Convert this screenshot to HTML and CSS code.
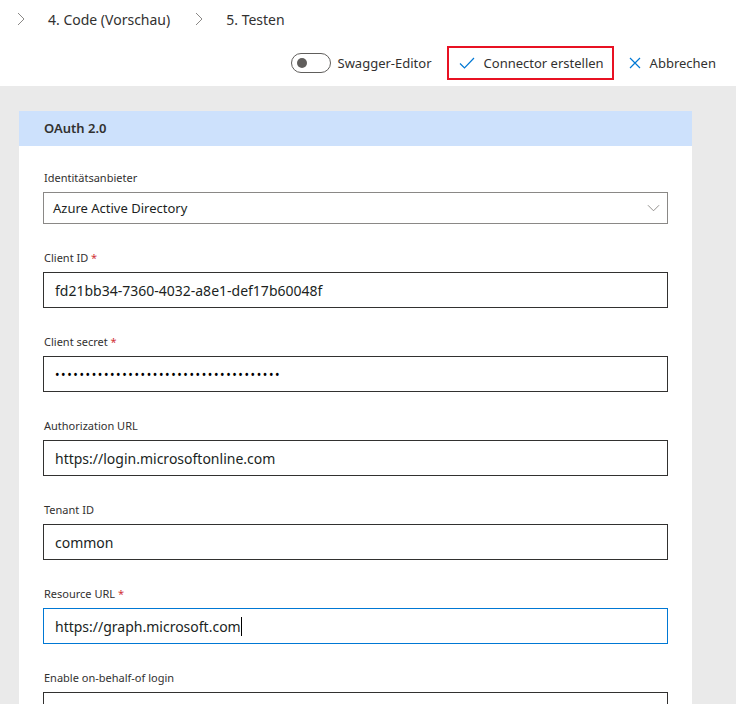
FILE: index.html
```html
<!DOCTYPE html>
<html lang="de">
<head>
  <meta charset="UTF-8">
  <meta name="viewport" content="width=device-width, initial-scale=1.0">
  <title>Benutzerdefinierter Connector</title>
  <link rel="stylesheet" href="styles.css">
</head>
<body>
  <header class="topbar">
    <nav class="steps">
      <svg class="chev" viewBox="0 0 8 14" width="8" height="14"><path d="M1 1l6 6-6 6" /></svg>
      <span class="step">4. Code (Vorschau)</span>
      <svg class="chev" viewBox="0 0 8 14" width="8" height="14"><path d="M1 1l6 6-6 6" /></svg>
      <span class="step">5. Testen</span>
    </nav>

    <div class="toolbar">
      <label class="toggle">
        <span class="switch"><span class="knob"></span></span>
        Swagger-Editor
      </label>
      <button class="cmd cmd-create">
        <svg viewBox="0 0 16 12" width="16" height="12"><path d="M1 6.5l4.5 4.5L15 1" /></svg>
        Connector erstellen
      </button>
      <button class="cmd">
        <svg viewBox="0 0 12 12" width="12" height="12"><path d="M1 1l10 10M11 1L1 11" /></svg>
        Abbrechen
      </button>
    </div>
  </header>

  <main class="content">
    <section class="card">
      <div class="card-head">OAuth 2.0</div>
      <div class="card-body">
        <div class="field">
          <div class="label">Identitätsanbieter</div>
          <div class="box box-select">
            Azure Active Directory
            <svg class="caret-down" viewBox="0 0 14 8" width="13" height="8"><path d="M1 1l6 6 6-6" /></svg>
          </div>
        </div>

        <div class="field">
          <div class="label">Client ID <span class="req">*</span></div>
          <div class="box">fd21bb34-7360-4032-a8e1-def17b60048f</div>
        </div>

        <div class="field">
          <div class="label">Client secret <span class="req">*</span></div>
          <div class="box box-secret">•••••••••••••••••••••••••••••••••••••</div>
        </div>

        <div class="field">
          <div class="label">Authorization URL</div>
          <div class="box">https://login.microsoftonline.com</div>
        </div>

        <div class="field">
          <div class="label">Tenant ID</div>
          <div class="box">common</div>
        </div>

        <div class="field">
          <div class="label">Resource URL <span class="req">*</span></div>
          <div class="box is-focused">https://graph.microsoft.com<span class="cursor"></span></div>
        </div>

        <div class="field">
          <div class="label">Enable on-behalf-of login</div>
          <div class="box"></div>
        </div>
      </div>
    </section>
  </main>
</body>
</html>
```

FILE: styles.css
```css
body {
  font-family: "Segoe UI", "Noto Sans", sans-serif;
  font-size: 14px;
  color: #323130;
  margin: 0;
  background: #eaeaea;
  overflow: hidden;
}
.topbar {
  background: #fff;
  height: 86px;
}
.steps {
  display: flex;
  align-items: center;
  height: 38px;
  padding-left: 17px;
}
.chev {
  fill: none;
  stroke: #8a8886;
  stroke-width: 1;
  margin-right: 23px;
}
.step {
  margin-right: 25px;
}
.toolbar {
  display: flex;
  justify-content: flex-end;
  align-items: center;
  margin-top: 8px;
  height: 34px;
  padding-right: 10px;
  font-size: 13px;
}
.toggle {
  display: flex;
  align-items: center;
  gap: 7px;
  margin-right: 15px;
}
.switch {
  height: 18px;
  width: 33px;
  border: 1px solid #605e5c;
  border-radius: 10px;
  display: flex;
  align-items: center;
  padding-left: 5px;
}
.knob {
  width: 10px;
  height: 10px;
  border-radius: 50%;
  background: #605e5c;
}
.cmd {
  font: inherit;
  color: #323130;
  background: none;
  border: 2px solid transparent;
  height: 34px;
  display: flex;
  align-items: center;
  gap: 9px;
  padding: 0 8px 0 10px;
}
.cmd svg {
  fill: none;
  stroke: #0078d4;
  stroke-width: 1.2;
}
.cmd-create {
  border-color: #e81123;
  margin-right: 3px;
}
.content {
  padding: 25px 44px 0 19px;
}
.card {
  background: #fff;
  min-height: 700px;
}
.card-head {
  background: #cde1fc;
  height: 35px;
  line-height: 35px;
  padding-left: 25px;
  font-size: 13px;
  font-weight: 600;
}
.card-body {
  padding: 24px 24px 0;
}
.field {
  margin-bottom: 26px;
}
.label {
  font-size: 11px;
  line-height: 16px;
  margin-bottom: 6px;
  padding-left: 1px;
}
.req {
  color: #d13438;
}
.box {
  height: 36px;
  border: 1px solid #323130;
  box-sizing: border-box;
  padding: 0 11px;
  display: flex;
  align-items: center;
  color: #201f1e;
  white-space: nowrap;
}
.box-select {
  height: 32px;
  border-color: #8a8886;
  padding: 0 7px 0 9px;
  font-size: 13px;
  justify-content: space-between;
}
.caret-down {
  fill: none;
  stroke: #8a8886;
  stroke-width: 1;
}
.box-secret {
  color: #000;
  font-size: 12px;
  letter-spacing: 1.6px;
}
.is-focused {
  border-color: #0078d4;
}
.cursor {
  display: inline-block;
  width: 1px;
  height: 19px;
  background: #000;
}
```
